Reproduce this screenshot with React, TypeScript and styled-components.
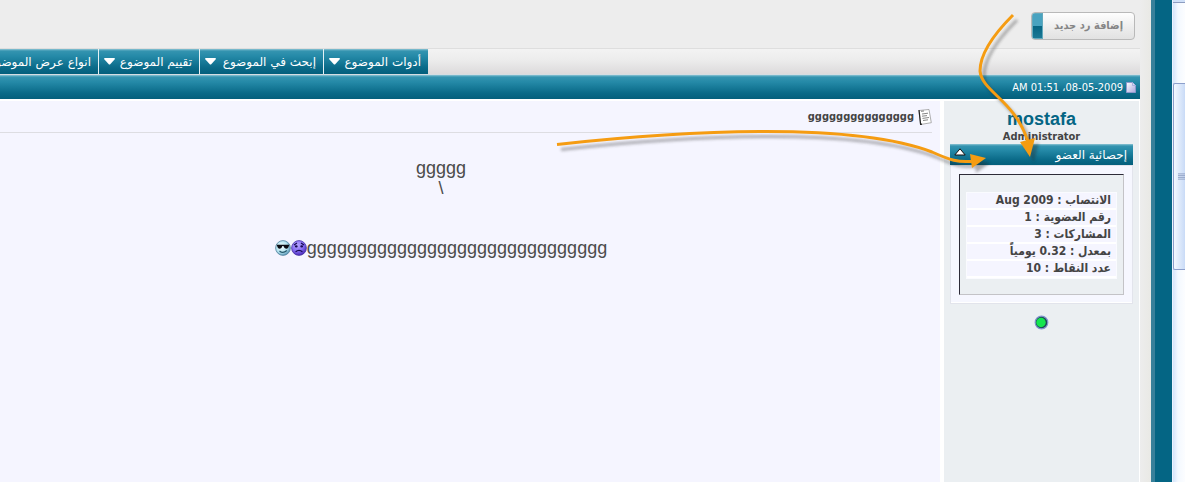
import React from "react";
import styled, { createGlobalStyle } from "styled-components";

const tahoma = `"DejaVu Sans Condensed", "DejaVu Sans", sans-serif`;
const wide = `"DejaVu Sans", sans-serif`;
const arial = `"Liberation Sans", "DejaVu Sans", sans-serif`;
const tealGradient = "linear-gradient(#8cc4d4 0, #3494b0 2px, #2489a7 30%, #0a6a88 75%, #045f7c 100%)";

const GlobalStyle = createGlobalStyle`
  * { box-sizing: border-box; }
  body { margin: 0; background: #046584; font-family: ${tahoma}; font-size: 11px; color: #444; overflow: hidden; }
  button { font: inherit; border: 0; padding: 0; cursor: pointer; }
`;

const Screen = styled.div`
  position: relative;
  display: flex;
  height: 100vh;
  overflow: hidden;
`;

const Page = styled.main`
  flex: 1;
  min-width: 0;
  display: flex;
  flex-direction: column;
  background: linear-gradient(to right, #ededed, #ededed calc(100% - 11px), #e9e9e5);
  padding-right: 11px;
`;

const PageEdge = styled.div`
  width: 21px;
  background: #046584;
  border-left: 4px solid #38809a;
`;

const ScrollTrack = styled.div`
  width: 13px;
  background: linear-gradient(to right, #d5e4fa, #f4f9ff 5px, #fcfdff);
  border-left: 1px solid #eaf3ff;
  display: flex;
  flex-direction: column;
`;

const ScrollCap = styled.div`
  height: 3px;
  border-bottom: 1px solid #8c9cc0;
  margin-bottom: 80px;
  background: #cfe0f8;
`;

const ScrollThumb = styled.div`
  height: 187px;
  border: 1px solid #8c9fcb;
  border-right: 0;
  border-radius: 2px 0 0 2px;
  background: linear-gradient(to right, #f3f8ff, #c9dbf7);
  display: flex;
  align-items: center;
  padding-left: 4px;
`;

const Actions = styled.div`
  height: 48px;
  padding: 12px 5px 0 0;
`;

const ReplyButton = styled.button`
  display: flex;
  width: 104px;
  height: 28px;
  border: 1px solid #b9b9b9;
  border-radius: 4px;
  overflow: hidden;
  background: linear-gradient(#fefefe, #ececec 60%, #e2e2e2);
  color: #858585;
  font: bold 11px ${tahoma};
`;

const ReplyLabel = styled.span`
  flex: 1;
  line-height: 26px;
  text-align: center;
`;

const ReplyAccent = styled.span`
  width: 11px;
  align-self: stretch;
  border: 1px solid #62a9bd;
  background: linear-gradient(#49a3c0 48%, #066482 48%, #1b7895);
`;

const ToolBar = styled.nav`
  display: flex;
  justify-content: flex-end;
  height: 27px;
  margin-left: -36px;
  border-top: 1px solid #dedede;
  border-bottom: 1px solid #d4dde2;
  background: linear-gradient(#f3f3f3, #ececec 45%, #dcdadb);
`;

const Tab = styled.button<{ $width: number }>`
  display: flex;
  align-items: center;
  justify-content: space-between;
  width: ${(p) => p.$width}px;
  height: 25px;
  padding: 0 7px 0 5px;
  border-left: 1px solid #e4f1f5;
  background: ${tealGradient};
  color: #fff;
  font: 12px ${wide};
  white-space: nowrap;
`;

const DateBar = styled.div`
  display: flex;
  align-items: center;
  gap: 3px;
  height: 24px;
  padding-right: 4px;
  background: ${tealGradient};
  color: #fff;
`;

const PostBody = styled.article`
  flex: 1;
  display: flex;
  gap: 4px;
  border: solid #fff;
  border-width: 2px 1px 0 0;
  background: #fff;
`;

const Author = styled.aside`
  width: 195px;
  background: #ebeff2;
  padding: 8px 6px 0;
  text-align: center;
`;

const AuthorName = styled.a`
  display: block;
  color: #046584;
  font: bold 18px/20px ${arial};
  text-decoration: none;
`;

const AuthorRank = styled.div`
  font-weight: bold;
  line-height: 15px;
`;

const StatHeader = styled.div`
  display: flex;
  justify-content: space-between;
  height: 21px;
  padding: 0 6px 0 4px;
  font: 12px/22px ${wide};
  background: ${tealGradient};
  color: #fff;
`;

const Collapse = styled.button`
  display: flex;
  align-items: flex-start;
  padding-top: 4px;
  background: none;
`;

const StatPanel = styled.div`
  border: 1px solid #fff;
  border-bottom-width: 2px;
  outline: 1px solid #e2e4ec;
  outline-offset: -1px;
  background: #f6f7ff;
  padding: 8px 8px 7px;
`;

const StatFrame = styled.div`
  border: 1px solid #c3c3c7;
  border-top-color: #2d2b38;
  border-left-color: #2d2b38;
  background: #ebeff2;
  padding: 17px 6px 15px;
`;

const StatList = styled.ul`
  list-style: none;
  margin: 0;
  padding: 0;
  border: 1px solid #fafbff;
`;

const Stat = styled.li`
  height: 17px;
  padding: 0 5px;
  border-bottom: 2px solid #fff;
  background: #f5f5ff;
  font-size: 12px;
  font-weight: bold;
  line-height: 15px;
  text-align: start;
  white-space: nowrap;
`;

const Status = styled.div`
  display: flex;
  justify-content: center;
  padding-top: 11px;
`;

const Post = styled.section`
  flex: 1;
  min-width: 0;
  background: #f5f5ff;
  padding: 6px 8px 0 0;
`;

const PostTitle = styled.h2`
  display: flex;
  align-items: center;
  gap: 4px;
  height: 26px;
  margin: 0;
  padding-bottom: 6px;
  border-bottom: 1px solid #dddde2;
  font-size: 11px;
`;

const Message = styled.div`
  padding: 25px 50px 0 0;
  color: #4b4b4b;
  font: 18px/20px ${arial};
  text-align: center;
`;

const Line = styled.p`
  display: flex;
  justify-content: center;
  align-items: center;
  height: 20px;
  margin: 0;
`;

const Arrows = styled.svg`
  position: absolute;
  top: 0;
  right: 0;
  pointer-events: none;
`;

const tabs = [
  { label: "أدوات الموضوع", width: 105 },
  { label: "إبحث في الموضوع", width: 124 },
  { label: "تقييم الموضوع", width: 101 },
  { label: "انواع عرض الموضوع", width: 134 },
];

const stats = [
  "الانتصاب : Aug 2009",
  "رقم العضوية : 1",
  "المشاركات : 3",
  "بمعدل : 0.32 يومياً",
  "عدد النقاط : 10",
];

const DownMark = () => (
  <svg width="11" height="7" viewBox="0 0 11 7" aria-hidden="true">
    <path d="M0 1Q0 0 1 0H10Q11 0 11 1L6 6.5H5Z" fill="#fff" />
  </svg>
);

const UpMark = () => (
  <svg width="12" height="8" viewBox="0 0 12 8" aria-hidden="true">
    <path d="M6 .8L11.2 7H.8Z" fill="#fff" stroke="#111" />
  </svg>
);

const PostMark = () => (
  <svg width="10" height="11" viewBox="0 0 10 11" aria-hidden="true">
    <defs>
      <linearGradient id="pm" x1="0" y1="0" x2="1" y2="1">
        <stop offset="0" stopColor="#fff" />
        <stop offset="1" stopColor="#a9a6dc" />
      </linearGradient>
    </defs>
    <path d="M.5 .5H6.5L9.5 3.5V10.5H.5Z" fill="url(#pm)" stroke="#8f98cc" />
    <path d="M6.5 .5V3.5H9.5" fill="#d9dcf5" stroke="#a9b0dc" />
  </svg>
);

const NoteIcon = () => (
  <svg width="14" height="16" viewBox="0 0 14 16" aria-hidden="true">
    <path d="M1 1.5L11 .5L13.3 13.7L2.5 15.5Z" fill="#fff" stroke="#999" strokeWidth=".8" />
    <path d="M1 1L2.6 15.4L4 15.2" fill="none" stroke="#222" strokeWidth="1.2" />
    <path d="M3 2.3L6 2M4 5L10 4.2M4 7.2L9 6.6M4.5 9.4L11 8.5M5 11.5L10 10.8" stroke="#777" strokeWidth=".9" />
  </svg>
);

const SadFace = () => (
  <svg width="16" height="16" viewBox="0 0 16 16" aria-label="حزين">
    <defs>
      <radialGradient id="sad" cx=".4" cy=".3" r=".7">
        <stop offset="0" stopColor="#b8a6ff" />
        <stop offset=".55" stopColor="#8a70f5" />
        <stop offset="1" stopColor="#4a2bb8" />
      </radialGradient>
    </defs>
    <circle cx="8" cy="8" r="7.4" fill="url(#sad)" stroke="#4a35a5" strokeWidth=".8" />
    <path d="M3 5L6 3M13 5L10 3M4.6 11.8Q8 8.8 11.4 11.8" fill="none" stroke="#160a50" strokeWidth="1.2" />
    <ellipse cx="5.3" cy="6.4" rx="1.4" ry="1.1" fill="#160a50" />
    <ellipse cx="10.7" cy="6.4" rx="1.4" ry="1.1" fill="#160a50" />
  </svg>
);

const CoolFace = () => (
  <svg width="16" height="16" viewBox="0 0 16 16" aria-label="رائع">
    <defs>
      <radialGradient id="cool" cx=".4" cy=".4" r=".65">
        <stop offset="0" stopColor="#f4ffff" />
        <stop offset=".6" stopColor="#b4e3ef" />
        <stop offset="1" stopColor="#4a8aad" />
      </radialGradient>
    </defs>
    <circle cx="8" cy="8" r="7.4" fill="url(#cool)" stroke="#5685a0" strokeWidth=".8" />
    <path d="M1.5 4.8H14.5L13 8Q11.5 9.5 9.6 8L8.4 6H7.4L6.4 8Q4.5 9.5 3 8Z" fill="#0c0c12" />
    <path d="M4.5 11Q8 14 11.8 10.5" fill="none" stroke="#22566a" strokeWidth="1.1" />
  </svg>
);

const OnlineDot = () => (
  <svg width="15" height="15" viewBox="0 0 15 15" aria-label="متصل">
    <circle cx="7.5" cy="7.5" r="6.3" fill="#1f4b55" stroke="#7f94cc" strokeWidth="1.2" />
    <circle cx="7" cy="7.5" r="4.7" fill="#14e650" />
  </svg>
);

export default function App() {
  return (
    <Screen>
      <GlobalStyle />
      <Page dir="rtl" lang="ar">
        <Actions>
          <ReplyButton type="button">
            <ReplyLabel>إضافة رد جديد</ReplyLabel>
            <ReplyAccent />
          </ReplyButton>
        </Actions>
        <ToolBar>
          {tabs.map((t) => (
            <Tab key={t.label} type="button" $width={t.width}>
              {t.label}
              <DownMark />
            </Tab>
          ))}
        </ToolBar>
        <DateBar>
          <PostMark />
          <span>08-05-2009، 01:51 AM</span>
        </DateBar>
        <PostBody>
          <Author>
            <AuthorName href="#mostafa">mostafa</AuthorName>
            <AuthorRank>Administrator</AuthorRank>
            <StatHeader>
              <span>إحصائية العضو</span>
              <Collapse type="button" aria-label="طي">
                <UpMark />
              </Collapse>
            </StatHeader>
            <StatPanel>
              <StatFrame>
                <StatList>
                  {stats.map((s) => (
                    <Stat key={s}>{s}</Stat>
                  ))}
                </StatList>
              </StatFrame>
            </StatPanel>
            <Status>
              <OnlineDot />
            </Status>
          </Author>
          <Post>
            <PostTitle>
              <NoteIcon />
              <span>ggggggggggggggg</span>
            </PostTitle>
            <Message>
              <Line>ggggg</Line>
              <Line dir="ltr">\</Line>
              <Line />
              <Line />
              <Line>
                <span>gggggggggggggggggggggggggggggg</span>
                <SadFace />
                <CoolFace />
              </Line>
            </Message>
          </Post>
        </PostBody>
      </Page>
      <PageEdge />
      <ScrollTrack>
        <ScrollCap />
        <ScrollThumb>
          <svg width="8" height="9" viewBox="0 0 8 9" aria-hidden="true">
            <path d="M0 1.5H8M0 3.5H8M0 5.5H8M0 7.5H8" stroke="#8b9cc0" />
          </svg>
        </ScrollThumb>
      </ScrollTrack>
      <Arrows width="640" height="200" viewBox="545 0 640 200" aria-hidden="true">
        <defs>
          <filter id="soft" x="-10%" y="-30%" width="120%" height="160%">
            <feGaussianBlur stdDeviation="1.8" />
          </filter>
          <g id="curves">
            <path d="M557 144.500C680 131 850 121 932 152C950 160 958 163 975 161" fill="none" strokeWidth="3" />
            <path d="M1013 15C990 38 980 56 980 71C982 92 1015 100 1028 142" fill="none" strokeWidth="3" />
            <path d="M970 154L986 158L972 168Z" stroke="none" />
            <path d="M1020 142L1035 138L1030 157Z" stroke="none" />
          </g>
        </defs>
        <g transform="translate(4 5)" opacity=".35" stroke="#222" fill="#222" filter="url(#soft)">
          <use href="#curves" />
        </g>
        <use href="#curves" stroke="#f59c12" fill="#f59c12" />
      </Arrows>
    </Screen>
  );
}
